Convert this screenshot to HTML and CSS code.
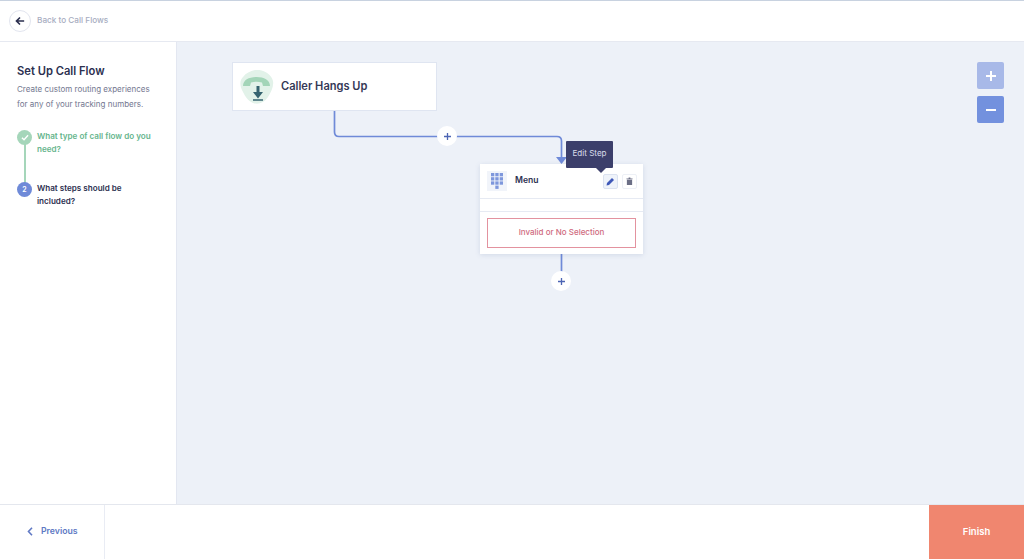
FILE: index.html
```html
<!DOCTYPE html>
<html lang="en">
<head>
<meta charset="utf-8">
<title>Set Up Call Flow</title>
<link rel="stylesheet" href="styles.css">
</head>
<body>
<div class="app">
  <header class="topbar">
    <span class="back-btn">
      <svg width="10" height="10" viewBox="0 0 12 12"><path d="M11 6H2M6 1.800 1.800 6 6 10.200" fill="none" stroke="#2b2f4f" stroke-width="2"/></svg>
    </span>
    <span class="back-label">Back to Call Flows</span>
  </header>
  <div class="main">
    <aside class="sidebar">
      <h1 class="side-title">Set Up Call Flow</h1>
      <p class="side-desc">Create custom routing experiences for any of your tracking numbers.</p>
      <ol class="steps">
        <li class="step step-done">
          <span class="step-dot dot-done">
            <svg width="8" height="7" viewBox="0 0 9 8"><path d="M1 4.200 3.400 6.500 8 1.500" fill="none" stroke="#fff" stroke-width="1.600"/></svg>
          </span>
          <span class="step-text">What type of call flow do you need?</span>
        </li>
        <li class="step step-current">
          <span class="step-dot dot-current">2</span>
          <span class="step-text">What steps should be included?</span>
        </li>
      </ol>
    </aside>
    <section class="canvas">
      <svg class="wires" width="848" height="462" viewBox="0 0 848 462">
        <path d="M157.500 68V90Q157.500 94.500 162 94.500H380Q384.500 94.500 384.500 99V118M384.500 212V230" fill="none" stroke="#6f8ad8" stroke-width="1.700"/>
        <path d="M379 115H390L384.500 122Z" fill="#6f8ad8"/>
      </svg>

      <div class="node node-start">
        <svg class="start-icon" width="34" height="34" viewBox="0 0 34 34">
          <path d="M15 0C22 -1 31 3 33 11C34 17 31 22 28 27C24 33 18 35 13 33C8 31 5 26 3 22C0 17 -1 11 3 7C6 3 10 1 15 0Z" fill="#e2f2e9"/>
          <path d="M3 16C3 10 9 7 16.500 7C24 7 30 10 30 16L23 16L22 12.500C18 11.500 15 11.500 11 12.500L10 16Z" fill="#a3d5b8"/>
          <path d="M16.500 16H19.500V22H23L18 28.500L13 22H16.500Z" fill="#35636f"/>
          <path d="M13 30H23" stroke="#35636f" stroke-width="1.500"/>
        </svg>
        <span class="start-label">Caller Hangs Up</span>
      </div>

      <span class="add add-one">
        <svg width="7" height="7" viewBox="0 0 8 8"><path d="M4 0V8M0 4H8" stroke="#4d65b4" stroke-width="1.500"/></svg>
      </span>

      <div class="node node-menu">
        <div class="menu-head">
          <span class="keypad">
            <svg width="12" height="16" viewBox="0 0 12 16" fill="#7e97dc">
              <rect x="0" y="0" width="3.300" height="3.300"/><rect x="4.300" y="0" width="3.300" height="3.300"/><rect x="8.700" y="0" width="3.300" height="3.300"/>
              <rect x="0" y="4.200" width="3.300" height="3.300"/><rect x="4.300" y="4.200" width="3.300" height="3.300"/><rect x="8.700" y="4.200" width="3.300" height="3.300"/>
              <rect x="0" y="8.400" width="3.300" height="3.300"/><rect x="4.300" y="8.400" width="3.300" height="3.300"/><rect x="8.700" y="8.400" width="3.300" height="3.300"/>
              <rect x="4.300" y="12.600" width="3.300" height="3.300"/>
            </svg>
          </span>
          <span class="menu-name">Menu</span>
          <span class="tool tool-active">
            <svg width="9" height="9" viewBox="0 0 9 9"><path d="M0.500 8.500 1 6 6 1 8 3 3 8Z" fill="#3f58b8"/></svg>
          </span>
          <span class="tool">
            <svg width="7" height="8" viewBox="0 0 8 9"><path d="M0.500 1.500H7.500V2.500H0.500ZM3 0.500H5V1.500H3ZM1 3H7V9H1Z" fill="#6c6f86"/></svg>
          </span>
        </div>
        <div class="menu-gap"></div>
        <div class="menu-body">
          <div class="invalid">Invalid or No Selection</div>
        </div>
      </div>

      <div class="tooltip">Edit Step</div>

      <span class="add add-two">
        <svg width="7" height="7" viewBox="0 0 8 8"><path d="M4 0V8M0 4H8" stroke="#4d65b4" stroke-width="1.500"/></svg>
      </span>

      <div class="zoom">
        <span class="zoom-btn zoom-in">
          <svg width="10" height="10" viewBox="0 0 10 10"><path d="M5 0V10M0 5H10" stroke="#fff" stroke-width="2"/></svg>
        </span>
        <span class="zoom-btn zoom-out">
          <svg width="10" height="10" viewBox="0 0 10 10"><path d="M0 5H10" stroke="#fff" stroke-width="2"/></svg>
        </span>
      </div>
    </section>
  </div>
  <footer class="footer">
    <a class="prev">
      <svg width="6" height="9" viewBox="0 0 6 9"><path d="M5 0.800 1.500 4.500 5 8.200" fill="none" stroke="#6079c4" stroke-width="1.600"/></svg>
      <span>Previous</span>
    </a>
    <a class="finish">Finish</a>
  </footer>
</div>
</body>
</html>
```

FILE: styles.css
```css
* { box-sizing: border-box; }
html, body { margin: 0; height: 100%; }
body { font-family: Inter, "Liberation Sans", sans-serif; background: #fff; overflow: hidden; }
.app { display: flex; flex-direction: column; height: 559px; border-top: 1px solid #c8d2e0; }

.topbar { height: 41px; flex: none; display: flex; align-items: center; gap: 6px; padding-left: 9px; padding-bottom: 1px; border-bottom: 1px solid #e6e9f1; background: #fff; }
.back-btn { width: 22px; height: 22px; border-radius: 50%; border: 1px solid #e2e5ef; display: flex; align-items: center; justify-content: center; }
.back-label { font-size: 8.200px; font-weight: 500; color: #a7adc1; position: relative; top: -1px; }

.main { flex: 1; display: flex; min-height: 0; }
.sidebar { width: 177px; flex: none; padding: 22px 19px 0 17px; background: #fff; border-right: 1px solid #e3e7f1; }
.side-title { margin: 0; font-size: 11.200px; line-height: 15px; font-weight: 600; color: #2c3050; }
.side-desc { margin: 3px 0 0; font-size: 8px; line-height: 15px; color: #73778f; }
.steps { list-style: none; margin: 18px 0 0; padding: 0; }
.step { display: flex; gap: 5px; position: relative; font-size: 8.100px; line-height: 13px; font-weight: 600; }
.step-done { height: 52px; color: #66b58d; }
.step-current { color: #2c3050; }
.step-done::before { content: ""; position: absolute; left: 7px; top: 10px; width: 1.500px; height: 46px; background: #a5d6ba; }
.step-dot { width: 15px; height: 15px; flex: none; border-radius: 50%; display: flex; align-items: center; justify-content: center; position: relative; color: #fff; font-size: 7px; }
.dot-done { background: #a5d6ba; }
.dot-current { background: #6f8ad8; }

.canvas { flex: 1; position: relative; background: #edf1f8; overflow: hidden; }
.wires { position: absolute; left: 0; top: 0; }
.node { position: absolute; background: #fff; }
.node-start { left: 55px; top: 20px; width: 205px; height: 49px; display: flex; align-items: center; gap: 7px; padding: 0 0 0 7px; border: 1px solid #dfe5f1; }
.start-label { font-size: 11.100px; font-weight: 600; color: #343856; position: relative; top: -1px; }

.add { position: absolute; width: 20px; height: 20px; border-radius: 50%; background: #fff; display: flex; align-items: center; justify-content: center; }
.add-one { left: 260px; top: 84px; }
.add-two { left: 374px; top: 229px; }

.node-menu { left: 303px; top: 122px; width: 163px; height: 90px; box-shadow: 0 1px 5px rgba(90, 110, 160, 0.180); }
.menu-head { height: 35px; display: flex; align-items: center; padding: 0 6px 0 7px; border-bottom: 1px solid #e6eaf3; }
.keypad { width: 20px; height: 20px; background: #f1f4fa; display: flex; align-items: center; justify-content: center; margin-right: 8px; }
.menu-name { flex: 1; font-size: 8.600px; font-weight: 600; color: #2c3050; position: relative; top: -1px; }
.tool { width: 15px; height: 15px; margin-left: 4px; background: #fff; border: 1px solid #edf0f6; border-radius: 2px; display: flex; align-items: center; justify-content: center; }
.tool-active { background: #eff3fa; border-color: #dbe2f0; }
.menu-gap { height: 13px; border-bottom: 1px solid #e6eaf3; }
.menu-body { padding: 6px 7px 0 7px; }
.invalid { height: 30px; border: 1px solid #e3929f; display: flex; align-items: center; justify-content: center; font-size: 8px; font-weight: 500; color: #cf6b80; padding-bottom: 2px; }

.tooltip { position: absolute; left: 389px; top: 99px; width: 47px; height: 27px; background: #3c3f6b; border-radius: 1px; color: #d8dbea; font-size: 8.100px; display: flex; align-items: center; justify-content: center; padding-bottom: 3px; }
.tooltip::after { content: ""; position: absolute; left: 29px; bottom: -5px; border-left: 6px solid transparent; border-right: 6px solid transparent; border-top: 6px solid #3c3f6b; }

.zoom { position: absolute; left: 800px; top: 20px; display: flex; flex-direction: column; gap: 7px; }
.zoom-btn { width: 27px; height: 27px; border-radius: 2px; display: flex; align-items: center; justify-content: center; }
.zoom-in { background: #a8b9e8; }
.zoom-out { background: #7391de; }

.footer { height: 55px; flex: none; display: flex; justify-content: space-between; background: #fff; border-top: 1px solid #e4e7ee; }
.prev { width: 105px; display: flex; align-items: center; gap: 8px; padding: 0 0 2px 27px; border-right: 1px solid #e9ecf4; font-size: 8.700px; font-weight: 600; color: #6079c4; }
.finish { width: 95px; background: #f0866f; color: #fff; display: flex; align-items: center; justify-content: center; font-size: 9.500px; font-weight: 600; padding-bottom: 2px; }
```
